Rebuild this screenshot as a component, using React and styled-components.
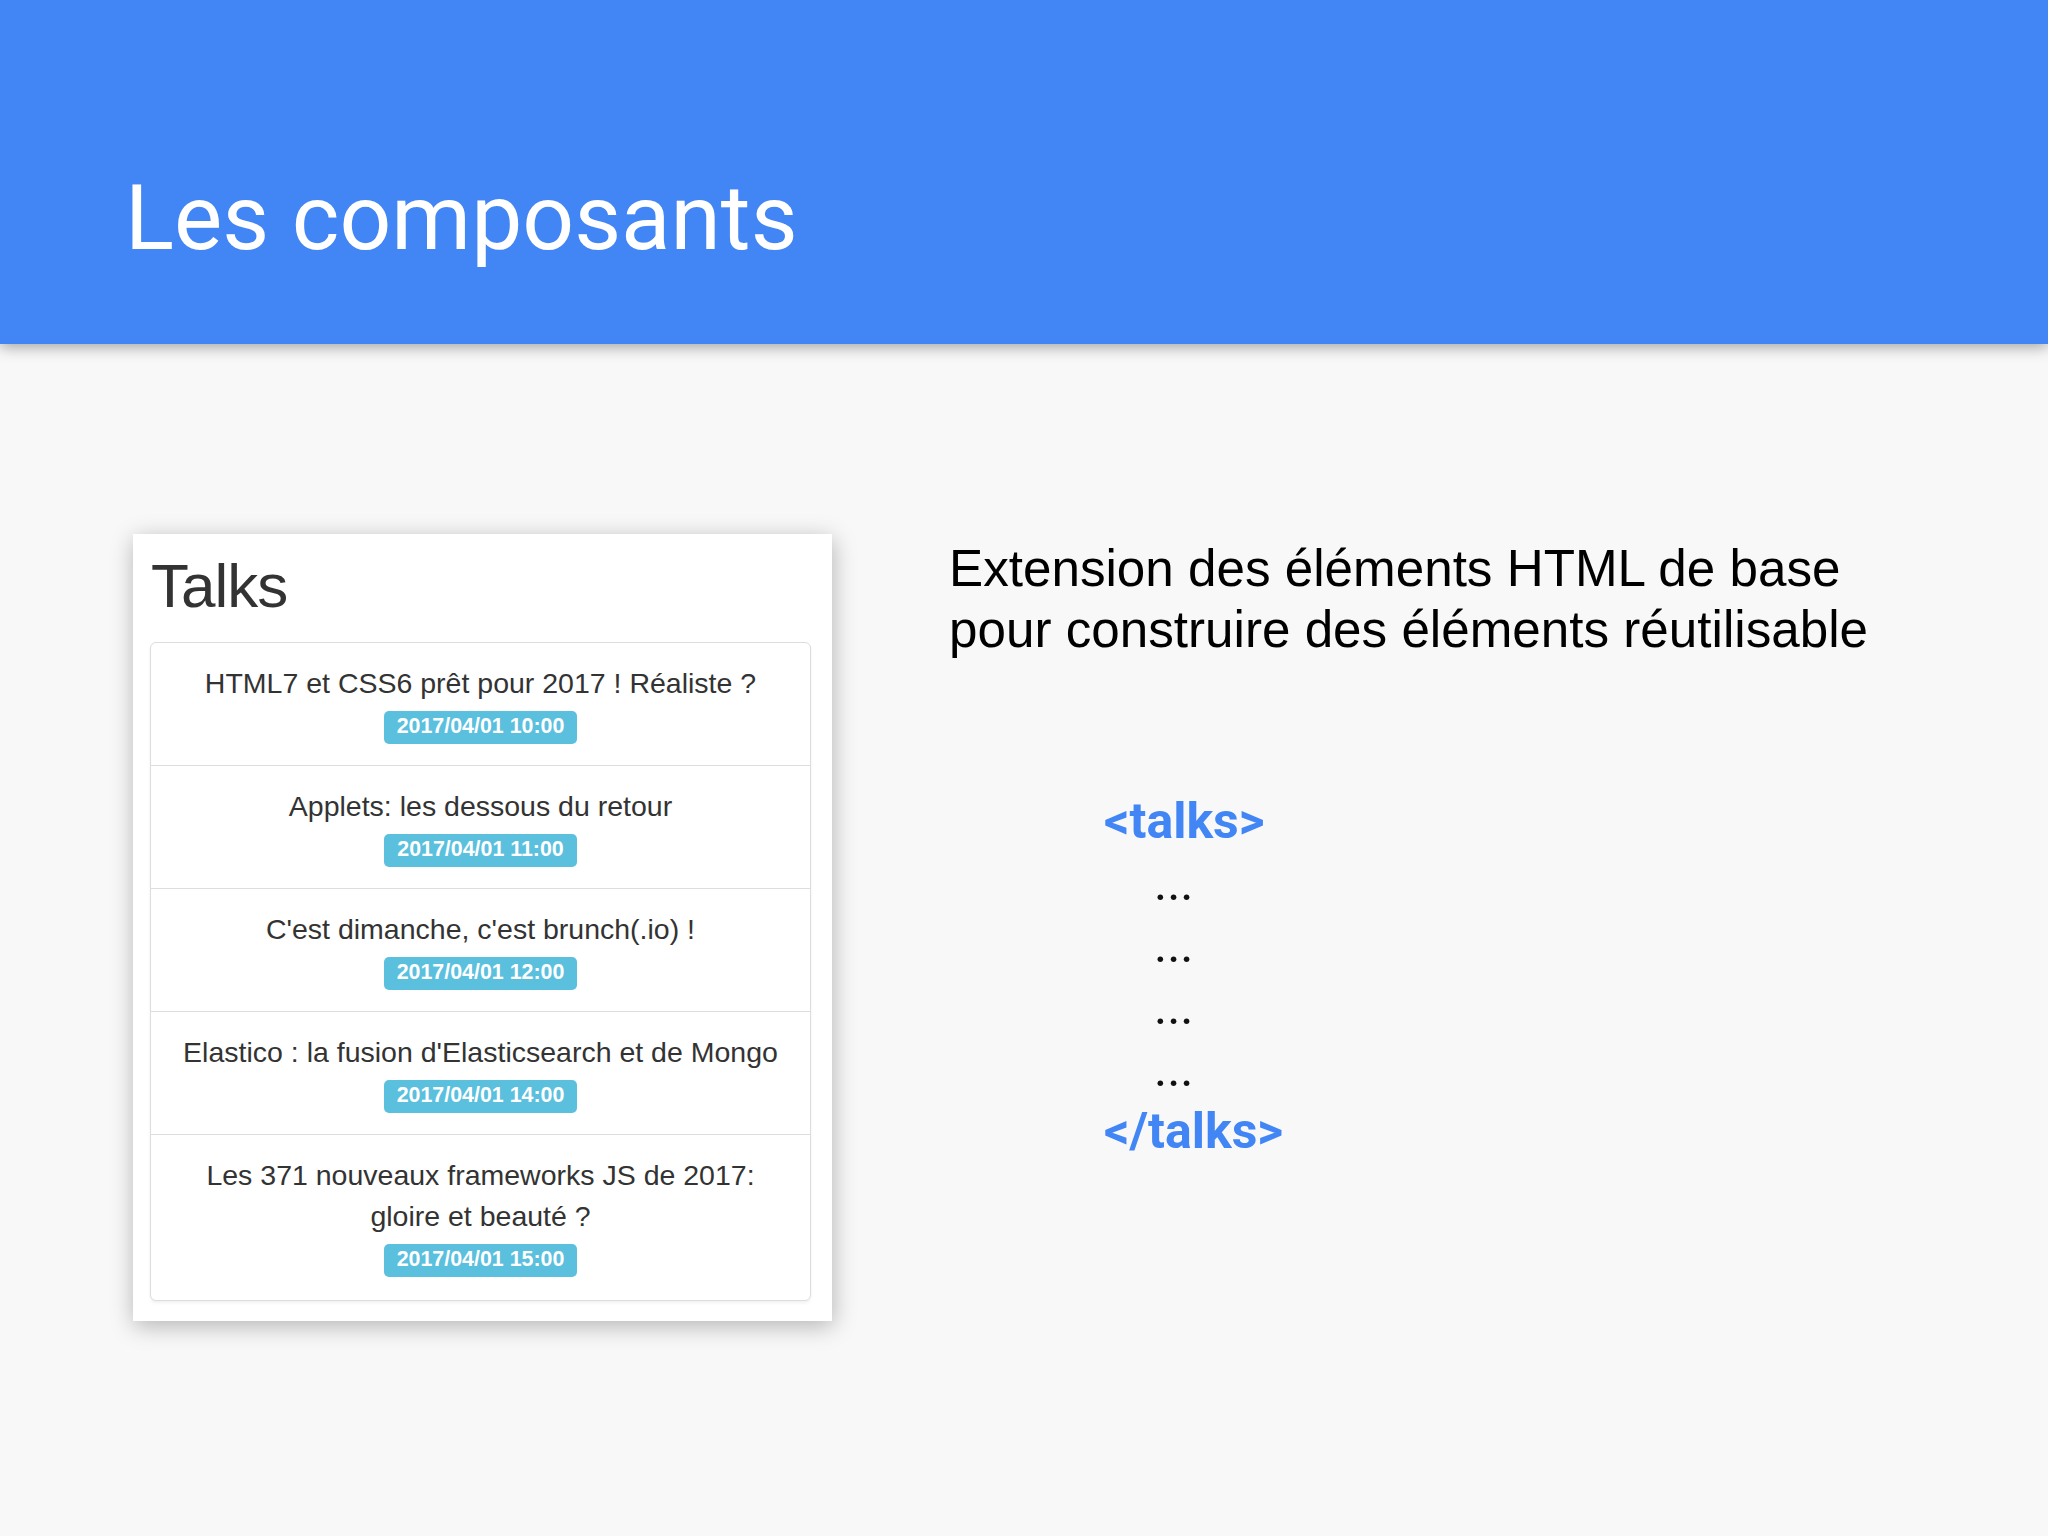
import React from 'react';
import styled, { createGlobalStyle } from 'styled-components';

const GlobalStyle = createGlobalStyle`
    body {
        margin: 0;
        background: #f8f8f8;
    }
`;

const Slide = styled.div`
    width: 2048px;
    height: 1536px;
    display: flex;
    flex-direction: column;
    background: #f8f8f8;
    overflow: hidden;
`;

const Header = styled.header`
    position: relative;
    z-index: 1;
    box-sizing: border-box;
    height: 344px;
    padding: 173px 0 0 125px;
    background: #4285f4;
    box-shadow: 0 3px 14px rgba(0, 0, 0, 0.35);
`;

const Title = styled.h1`
    margin: 0;
    font-family: Roboto, "Noto Sans", sans-serif;
    font-weight: 400;
    font-size: 91px;
    line-height: 1;
    color: #fff;
`;

const Main = styled.main`
    display: flex;
    align-items: flex-start;
    gap: 117px;
    padding: 190px 0 0 133px;
`;

const Card = styled.section`
    box-sizing: border-box;
    width: 699px;
    padding: 18px 21px 20px 17px;
    background: #fff;
    box-shadow: 1px 5px 22px rgba(0, 0, 0, 0.28);
    font-family: "Liberation Sans", Arial, sans-serif;
`;

const CardTitle = styled.h2`
    margin: 0 0 22px 1px;
    font-weight: 400;
    font-size: 62px;
    line-height: 68px;
    letter-spacing: -1px;
    color: #333;
`;

const TalkList = styled.ul`
    margin: 0;
    padding: 0;
    list-style: none;
    border: 1px solid #ddd;
    border-radius: 6px;
    background: #fff;
    box-shadow: 0 2px 3px rgba(0, 0, 0, 0.06);
`;

const TalkItem = styled.li`
    padding: 20px 24px 21px;
    text-align: center;
    & + & {
        border-top: 1px solid #ddd;
    }
    &:last-child {
        padding-bottom: 23px;
    }
`;

const TalkName = styled.div`
    font-size: 28.5px;
    line-height: 41px;
    color: #333;
`;

const LabelRow = styled.div`
    margin-top: 7px;
    line-height: 0;
`;

const Label = styled.span`
    display: inline-block;
    padding: 5px 13px 7px;
    border-radius: 5px;
    background: #5bc0de;
    color: #fff;
    font-weight: 700;
    font-size: 21.4px;
    line-height: 21px;
`;

const Description = styled.div`
    padding-top: 4px;
    font-family: "Liberation Sans", Arial, sans-serif;
`;

const Lead = styled.p`
    margin: 0;
    font-size: 51.2px;
    line-height: 61px;
    color: #000;
`;

const CodeBlock = styled.div`
    margin: 130px 0 0 155px;
    font-family: Roboto, "Noto Sans", sans-serif;
    font-size: 50px;
    line-height: 62px;
`;

const Tag = styled.div`
    font-weight: 700;
    color: #4285f4;
`;

const Dots = styled.div`
    padding-left: 50px;
    color: #111;
`;

const talks = [
    { name: "HTML7 et CSS6 prêt pour 2017 ! Réaliste ?", date: "2017/04/01 10:00" },
    { name: "Applets: les dessous du retour", date: "2017/04/01 11:00" },
    { name: "C'est dimanche, c'est brunch(.io) !", date: "2017/04/01 12:00" },
    { name: "Elastico : la fusion d'Elasticsearch et de Mongo", date: "2017/04/01 14:00" },
    { name: "Les 371 nouveaux frameworks JS de 2017: gloire et beauté ?", date: "2017/04/01 15:00" },
];

export default function App() {
    return (
        <Slide>
            <GlobalStyle />
            <Header>
                <Title>Les composants</Title>
            </Header>
            <Main>
                <Card>
                    <CardTitle>Talks</CardTitle>
                    <TalkList>
                        {talks.map((talk) => (
                            <TalkItem key={talk.date}>
                                <TalkName>{talk.name}</TalkName>
                                <LabelRow>
                                    <Label>{talk.date}</Label>
                                </LabelRow>
                            </TalkItem>
                        ))}
                    </TalkList>
                </Card>
                <Description>
                    <Lead>
                        Extension des éléments HTML de base<br />
                        pour construire des éléments réutilisable
                    </Lead>
                    <CodeBlock>
                        <Tag>&lt;talks&gt;</Tag>
                        <Dots>...</Dots>
                        <Dots>...</Dots>
                        <Dots>...</Dots>
                        <Dots>...</Dots>
                        <Tag>&lt;/talks&gt;</Tag>
                    </CodeBlock>
                </Description>
            </Main>
        </Slide>
    );
}
